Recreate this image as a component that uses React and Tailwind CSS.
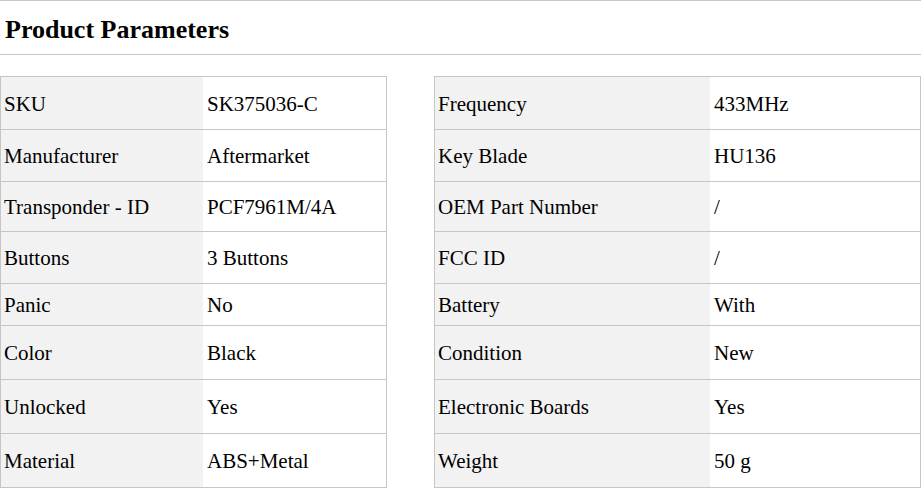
const left = [
  ['SKU', 'SK375036-C'],
  ['Manufacturer', 'Aftermarket'],
  ['Transponder - ID', 'PCF7961M/4A'],
  ['Buttons', '3 Buttons'],
  ['Panic', 'No'],
  ['Color', 'Black'],
  ['Unlocked', 'Yes'],
  ['Material', 'ABS+Metal'],
];

const right = [
  ['Frequency', '433MHz'],
  ['Key Blade', 'HU136'],
  ['OEM Part Number', '/'],
  ['FCC ID', '/'],
  ['Battery', 'With'],
  ['Condition', 'New'],
  ['Electronic Boards', 'Yes'],
  ['Weight', '50 g'],
];

// row heights incl. bottom border, taken from the screenshot
const heights = ['h-[53px]', 'h-[52px]', 'h-[50px]', 'h-[52px]', 'h-[42px]', 'h-[54px]', 'h-[54px]', 'h-[54px]'];

function ParamTable({ rows, width, labelWidth }) {
  return (
    <div className={`${width} border-x border-t border-[#c6c6c6] flex flex-col`}>
      {rows.map(([label, value], i) => (
        <div key={label} className={`${heights[i]} flex border-b border-[#c6c6c6]`}>
          <div className={`${labelWidth} bg-[#f2f2f2] flex items-center pl-[3px] pt-[3px]`}>{label}</div>
          <div className="flex-1 bg-white flex items-center pl-[4px] pt-[3px]">{value}</div>
        </div>
      ))}
    </div>
  );
}

export default function App() {
  return (
    <div className="w-[921px] bg-white text-black font-['Liberation_Serif',serif] text-[21px]">
      <div className="h-[55px] border-y border-[#c6c6c6] flex items-center pl-[5px] pt-[3px]">
        <h2 className="text-[26px] font-bold">Product Parameters</h2>
      </div>
      <div className="flex mt-[21px]">
        <ParamTable rows={left} width="w-[387px]" labelWidth="w-[202px]" />
        <div className="w-[47px]" />
        <ParamTable rows={right} width="w-[487px]" labelWidth="w-[275px]" />
      </div>
    </div>
  );
}
